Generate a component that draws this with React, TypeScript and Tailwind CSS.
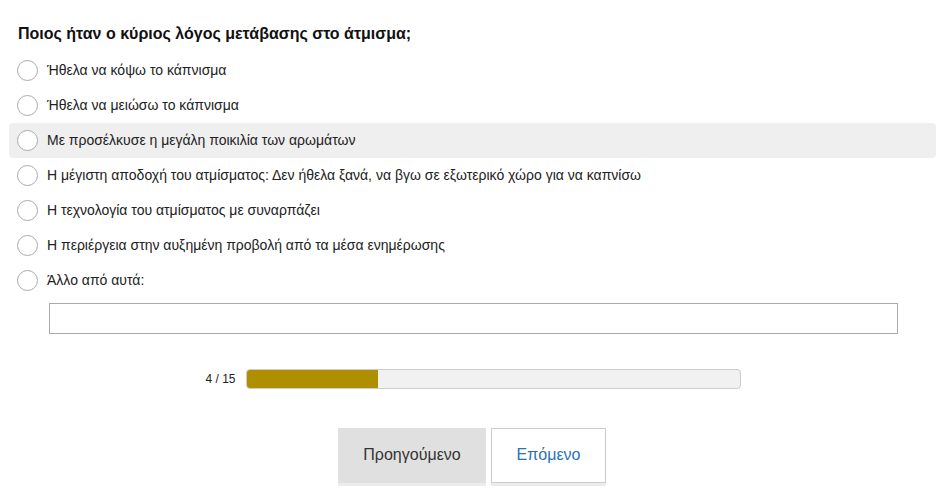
import React from "react";

const options = [
  "Ήθελα να κόψω το κάπνισμα",
  "Ήθελα να μειώσω το κάπνισμα",
  "Με προσέλκυσε η μεγάλη ποικιλία των αρωμάτων",
  "Η μέγιστη αποδοχή του ατμίσματος: Δεν ήθελα ξανά, να βγω σε εξωτερικό χώρο για να καπνίσω",
  "Η τεχνολογία του ατμίσματος με συναρπάζει",
  "Η περιέργεια στην αυξημένη προβολή από τα μέσα ενημέρωσης",
  "Άλλο από αυτά:",
];

export default function App() {
  const current = 4;
  const total = 15;
  return (
    <div
      className="w-[944px] h-[498px] bg-white text-[#222] overflow-hidden"
      style={{ fontFamily: '"Liberation Sans", Arial, sans-serif' }}
    >
      <div className="pt-[24px] pl-[9px] pr-[8px]">
        <div className="pl-[9px] h-[20px] leading-[20px] text-[16px] font-bold text-[#111] mb-[8.5px]">
          Ποιος ήταν ο κύριος λόγος μετάβασης στο άτμισμα;
        </div>
        <div className="flex flex-col">
          {options.map((o, i) => (
            <div
              key={i}
              className={`flex items-center h-[35px] pl-[8px] rounded-[4px] ${
                i === 2 ? "bg-[#efefef]" : ""
              }`}
            >
              <span className="w-[21px] h-[21px] rounded-full border border-[#aaa] bg-white shrink-0" />
              <span className="ml-[9px] text-[14px] leading-[18px]">{o}</span>
            </div>
          ))}
        </div>
        <div className="pl-[40px] pr-[38px] mt-[5px]">
          <div className="h-[31px] border border-[#aaa] bg-white" />
        </div>
      </div>
      <div className="flex items-center justify-center mt-[35px] h-[20px] pl-[2px]">
        <span className="text-[12px] text-[#222] mr-[10px] leading-[20px]">
          {current} / {total}
        </span>
        <div className="w-[495px] h-[20px] rounded-[4px] border border-[#ccc] bg-[#f1f1f1] overflow-hidden">
          <div
            className="h-full bg-[#ae8f00]"
            style={{ width: `${(current / total) * 100}%` }}
          />
        </div>
      </div>
      <div className="flex justify-center gap-[5px] mt-[39px]">
        <button className="w-[148px] h-[55px] bg-[#e0e0e0] text-[#333] text-[16px] shadow-[0_3px_0_#ececec]">
          Προηγούμενο
        </button>
        <button className="w-[115px] h-[55px] bg-white border border-[#ccc] text-[#2a72b8] text-[16px] shadow-[0_3px_0_#ececec]">
          Επόμενο
        </button>
      </div>
    </div>
  );
}
